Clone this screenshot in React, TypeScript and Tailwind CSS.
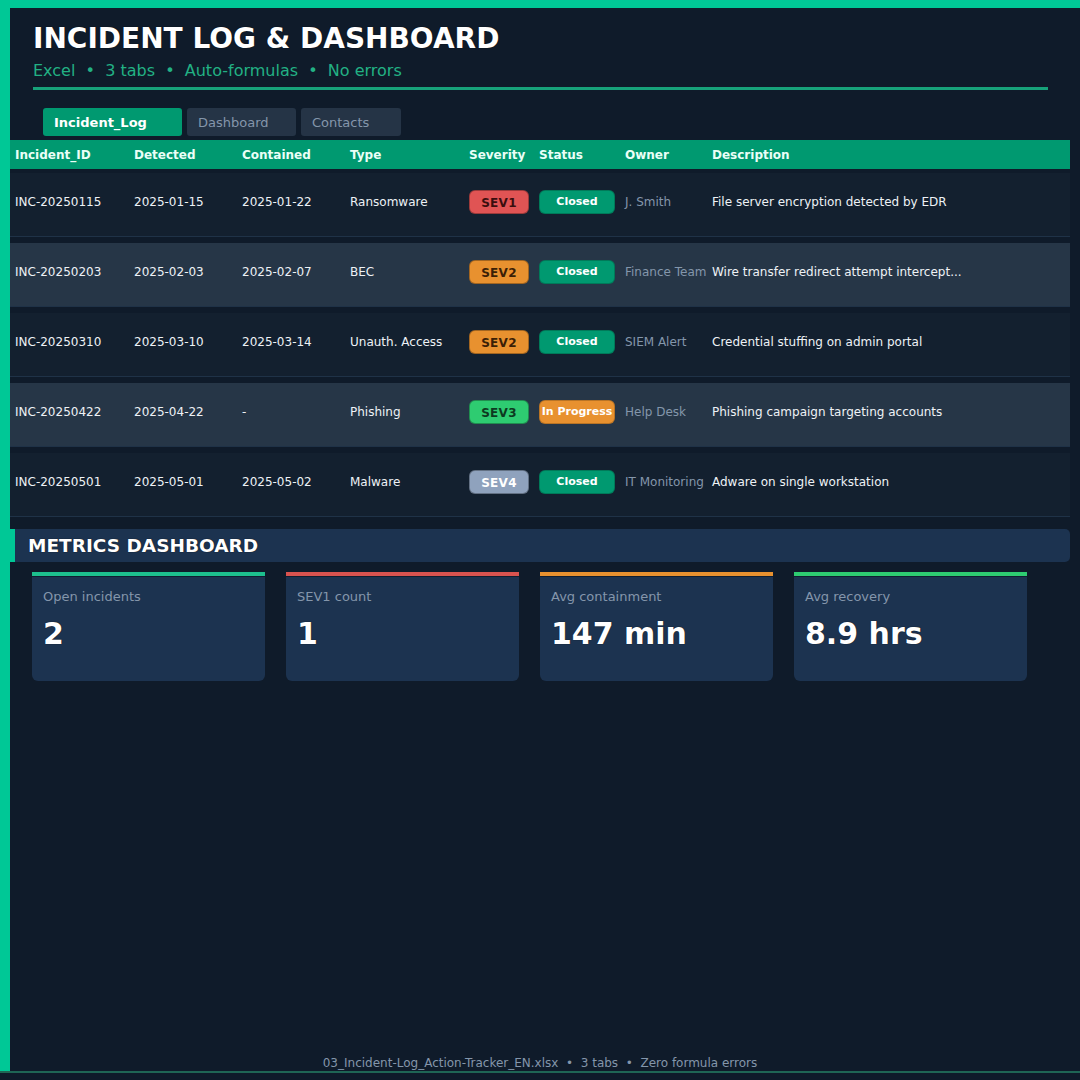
import React from "react";

type Row = {
  id: string;
  detected: string;
  contained: string;
  type: string;
  sev: "SEV1" | "SEV2" | "SEV3" | "SEV4";
  status: "Closed" | "In Progress";
  owner: string;
  desc: string;
};

const ROWS: Row[] = [
  { id: "INC-20250115", detected: "2025-01-15", contained: "2025-01-22", type: "Ransomware", sev: "SEV1", status: "Closed", owner: "J. Smith", desc: "File server encryption detected by EDR" },
  { id: "INC-20250203", detected: "2025-02-03", contained: "2025-02-07", type: "BEC", sev: "SEV2", status: "Closed", owner: "Finance Team", desc: "Wire transfer redirect attempt intercept..." },
  { id: "INC-20250310", detected: "2025-03-10", contained: "2025-03-14", type: "Unauth. Access", sev: "SEV2", status: "Closed", owner: "SIEM Alert", desc: "Credential stuffing on admin portal" },
  { id: "INC-20250422", detected: "2025-04-22", contained: "-", type: "Phishing", sev: "SEV3", status: "In Progress", owner: "Help Desk", desc: "Phishing campaign targeting accounts" },
  { id: "INC-20250501", detected: "2025-05-01", contained: "2025-05-02", type: "Malware", sev: "SEV4", status: "Closed", owner: "IT Monitoring", desc: "Adware on single workstation" },
];

const SEV_CLASS: Record<Row["sev"], string> = {
  SEV1: "bg-[#e05454] text-[#3a0e0e]",
  SEV2: "bg-[#e8912f] text-[#3a2006]",
  SEV3: "bg-[#2ecc71] text-[#0d3a20]",
  SEV4: "bg-[#8fa2bd] text-white",
};

const STATUS_CLASS: Record<Row["status"], string> = {
  Closed: "bg-[#009970] text-white",
  "In Progress": "bg-[#e8912f] text-white",
};

const METRICS = [
  { label: "Open incidents", value: "2", bar: "bg-[#1dc08e]" },
  { label: "SEV1 count", value: "1", bar: "bg-[#d9534f]" },
  { label: "Avg containment", value: "147 min", bar: "bg-[#e8912f]" },
  { label: "Avg recovery", value: "8.9 hrs", bar: "bg-[#2ecc71]" },
];

const COLS = "grid grid-cols-[119px_108px_108px_119px_70px_86px_87px_1fr] pl-[5px]";

export default function App() {
  return (
    <div className="flex h-[1080px] w-[1080px] flex-col bg-[#0f1b2a] font-['DejaVu_Sans',sans-serif]">
      <div className="flex flex-1 flex-col border-t-[8px] border-l-[10px] border-[#00c896]">
        {/* title block */}
        <div className="pt-[14px] pr-[32px] pl-[23px]">
          <h1 className="text-[28px] leading-[34px] font-bold text-white [text-shadow:0_0_1px_#000]">
            INCIDENT LOG &amp; DASHBOARD
          </h1>
          <p className="mt-[5px] text-[16px] leading-[20px] whitespace-pre text-[#22b184]">
            Excel  •  3 tabs  •  Auto-formulas  •  No errors
          </p>
          <div className="mt-[6px] h-[3px] bg-[#17a27a]" />
        </div>

        {/* sheet tabs */}
        <div className="mt-[18px] flex gap-[5px] pl-[33px]">
          <div className="flex h-[28px] w-[139px] items-center rounded-[3px] bg-[#009970] pt-[1px] pl-[11px] text-[13px] font-bold text-white">
            Incident_Log
          </div>
          <div className="flex h-[28px] w-[109px] items-center rounded-[3px] bg-[#253446] pt-[1px] pl-[11px] text-[13px] text-[#8496ab]">
            Dashboard
          </div>
          <div className="flex h-[28px] w-[100px] items-center rounded-[3px] bg-[#253446] pt-[1px] pl-[11px] text-[13px] text-[#8496ab]">
            Contacts
          </div>
        </div>

        {/* table */}
        <div className="mt-[4px] pr-[10px]">
          <div className={`${COLS} h-[29px] items-center bg-[#009970] pt-[1px] text-[12px] font-bold text-[#eafff7]`}>
            <span>Incident_ID</span>
            <span>Detected</span>
            <span>Contained</span>
            <span>Type</span>
            <span>Severity</span>
            <span>Status</span>
            <span>Owner</span>
            <span>Description</span>
          </div>
          {ROWS.map((r, i) => (
            <div
              key={r.id}
              className={`${COLS} h-[64px] items-center border-b border-[#1f3247] pb-[6px] text-[12px] text-[#eef2f6] ${
                i === 0 ? "mt-[4px]" : "mt-[6px]"
              } ${i % 2 === 1 ? "bg-[#263647]" : "bg-[#13202f]"}`}
            >
              <span>{r.id}</span>
              <span>{r.detected}</span>
              <span>{r.contained}</span>
              <span>{r.type}</span>
              <span>
                <span
                  className={`flex h-[24px] w-[60px] items-center justify-center rounded-[6px] border border-black/30 pt-[3px] text-[12px] font-bold tracking-[0.3px] ${SEV_CLASS[r.sev]}`}
                >
                  {r.sev}
                </span>
              </span>
              <span>
                <span
                  className={`flex h-[24px] w-[76px] items-center justify-center rounded-[6px] border border-black/20 pt-[2px] text-[11px] font-bold ${STATUS_CLASS[r.status]}`}
                >
                  {r.status}
                </span>
              </span>
              <span className="whitespace-nowrap text-[#8496ab]">{r.owner}</span>
              <span className="whitespace-nowrap">{r.desc}</span>
            </div>
          ))}
        </div>

        {/* metrics */}
        <div className="mt-[12px] mr-[10px] flex h-[33px] items-center rounded-r-[5px] border-l-[5px] border-[#00c896] bg-[#1c3350] pt-[1px] pl-[13px] text-[18.5px] font-bold text-white [text-shadow:0_0_1px_#000]">
          METRICS DASHBOARD
        </div>
        <div className="mt-[10px] flex gap-[21px] pl-[22px]">
          {METRICS.map((m) => (
            <div key={m.label} className="flex h-[109px] w-[233px] flex-col overflow-hidden rounded-b-[6px] bg-[#1c3350]">
              <div className={`h-[4px] ${m.bar}`} />
              <div className="border-t border-black/40" />
              <div className="pt-[12px] pl-[11px] text-[13px] leading-[16px] text-[#8496ab]">{m.label}</div>
              <div className="mt-[11px] pl-[11px] text-[30px] leading-[36px] font-bold text-white [text-shadow:0_0_1px_#000]">
                {m.value}
              </div>
            </div>
          ))}
        </div>

        <div className="mt-auto pr-[10px] text-center text-[12px] leading-[16px] whitespace-pre text-[#8496ab]">
          03_Incident-Log_Action-Tracker_EN.xlsx  •  3 tabs  •  Zero formula errors
        </div>
      </div>
      <div className="h-[2px] bg-[#1f6655]" />
      <div className="h-[7px]" />
    </div>
  );
}
